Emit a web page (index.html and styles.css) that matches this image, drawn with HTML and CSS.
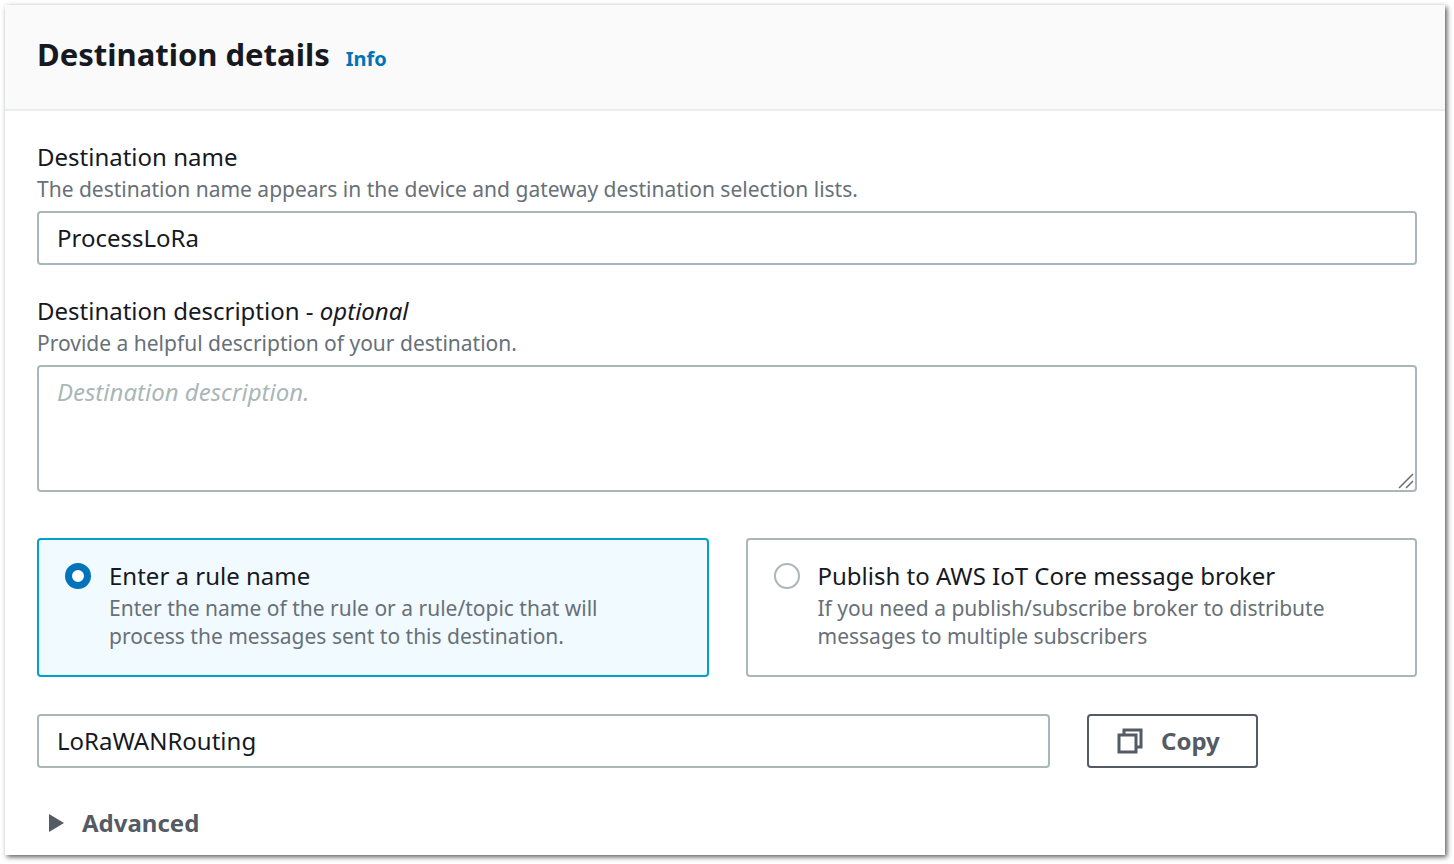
FILE: index.html
```html
<!DOCTYPE html>
<html lang="en">
<head>
    <meta charset="UTF-8">
    <meta name="viewport" content="width=device-width, initial-scale=1.0">
    <title>Destination details</title>
    <link rel="stylesheet" href="styles.css">
</head>
<body>
    <form class="panel">
        <header class="panel-header">
            <h2>Destination details</h2>
            <a class="info" href="#">Info</a>
        </header>

        <div class="panel-body">
            <div class="field">
                <label for="name">Destination name</label>
                <p class="hint">The destination name appears in the device and gateway destination selection lists.</p>
                <input class="text-input" type="text" id="name" value="ProcessLoRa">
            </div>

            <div class="field">
                <label for="description">Destination description - <em>optional</em></label>
                <p class="hint">Provide a helpful description of your destination.</p>
                <div class="textarea-wrap">
                    <textarea class="text-input" id="description" placeholder="Destination description."></textarea>
                    <svg class="grip" viewBox="0 0 16 16" aria-hidden="true">
                        <path d="M1 15L15 1M8 15L15 8"/>
                    </svg>
                </div>
            </div>

            <div class="tiles">
                <div class="tile selected">
                    <input type="radio" name="target" id="rule" checked>
                    <div>
                        <label for="rule">Enter a rule name</label>
                        <p class="hint">Enter the name of the rule or a rule/topic that will process the messages sent to this destination.</p>
                    </div>
                </div>
                <div class="tile">
                    <input type="radio" name="target" id="broker">
                    <div>
                        <label for="broker">Publish to AWS IoT Core message broker</label>
                        <p class="hint">If you need a publish/subscribe broker to distribute messages to multiple subscribers</p>
                    </div>
                </div>
            </div>

            <div class="rule-row">
                <input class="text-input" type="text" value="LoRaWANRouting" aria-label="Rule name">
                <div>
                    <button class="copy" type="button">
                        <svg viewBox="0 0 26 26" aria-hidden="true">
                            <path d="M2 7h17v17H2zM7 7V2h17v17h-5"/>
                        </svg>
                        Copy
                    </button>
                </div>
            </div>

            <button class="advanced" type="button" aria-expanded="false">
                <svg viewBox="0 0 15 18" aria-hidden="true">
                    <path d="M0 0L15 9L0 18z"/>
                </svg>
                Advanced
            </button>
        </div>
    </form>
</body>
</html>
```

FILE: styles.css
```css
* {
    box-sizing: border-box;
}
body {
    margin: 0;
    padding: 5px 9px 9px 5px;
    background-color: #fff;
    color: #16191f;
    font-family: "Noto Sans", "Open Sans", sans-serif;
    font-size: 24px;
    line-height: 32px;
}
h2, p {
    margin: 0;
}
input, textarea, button {
    margin: 0;
    font: inherit;
    color: inherit;
}
.panel {
    background-color: #fff;
    box-shadow: 2px 2px 5px rgba(0, 0, 0, 0.65);
}
.panel-header {
    display: flex;
    align-items: baseline;
    gap: 16px;
    padding: 29px 32px 34px;
    background-color: #fafafa;
    border-bottom: 2px solid #eaeded;
}
h2 {
    font-size: 31px;
    font-weight: 700;
    line-height: 40px;
}
.info {
    color: #0073bb;
    font-size: 20px;
    font-weight: 700;
    text-decoration: none;
}
.panel-body {
    padding: 30px 28px 16px 32px;
}
.field {
    margin-bottom: 30px;
}
label {
    display: block;
}
.hint {
    margin-top: 2px;
    color: #687078;
    font-size: 21px;
    line-height: 28px;
}
.text-input {
    display: block;
    width: 100%;
    height: 54px;
    padding: 0 18px 2px;
    background-color: #fff;
    border: 2px solid #aab7b8;
    border-radius: 4px;
}
.field .hint {
    margin-bottom: 8px;
}
.textarea-wrap {
    position: relative;
}
textarea.text-input {
    height: 127px;
    padding: 9px 18px;
    resize: vertical;
}
textarea::-webkit-resizer {
    display: none;
}
textarea::placeholder {
    color: #aab7b8;
    font-style: italic;
}
.grip {
    position: absolute;
    right: 3px;
    bottom: 3px;
    width: 16px;
    height: 16px;
    fill: none;
    stroke: #6b6b6b;
    stroke-width: 1.5;
    pointer-events: none;
}
.tiles {
    display: grid;
    grid-template-columns: 1fr 1fr;
    gap: 37px;
    margin: 46px 0 37px;
}
.tile {
    display: flex;
    align-items: flex-start;
    gap: 18px;
    padding: 20px 36px 25px 26px;
    border: 2px solid #aab7b8;
    border-radius: 4px;
}
.tile.selected {
    background-color: #f1faff;
    border-color: #00a1c9;
}
.tile input {
    appearance: none;
    flex: none;
    width: 26px;
    height: 26px;
    margin-top: 3px;
    background-color: #fff;
    border: 2px solid #aab7b8;
    border-radius: 50%;
}
.tile input:checked {
    border: 7px solid #0073bb;
}
.rule-row {
    display: grid;
    grid-template-columns: 1fr 330px;
    gap: 37px;
    margin-bottom: 39px;
}
.copy {
    display: flex;
    align-items: center;
    gap: 18px;
    height: 54px;
    padding: 0 36px 0 28px;
    background-color: #fff;
    border: 2px solid #545b64;
    border-radius: 4px;
    color: #545b64;
    font-weight: 700;
    cursor: pointer;
}
.copy svg {
    width: 26px;
    height: 26px;
    fill: none;
    stroke: #545b64;
    stroke-width: 3;
}
.advanced {
    display: flex;
    align-items: center;
    gap: 18px;
    padding: 0 12px;
    background: none;
    border: 0;
    color: #545b64;
    font-weight: 700;
    cursor: pointer;
}
.advanced svg {
    width: 15px;
    height: 18px;
    fill: #545b64;
}
```
